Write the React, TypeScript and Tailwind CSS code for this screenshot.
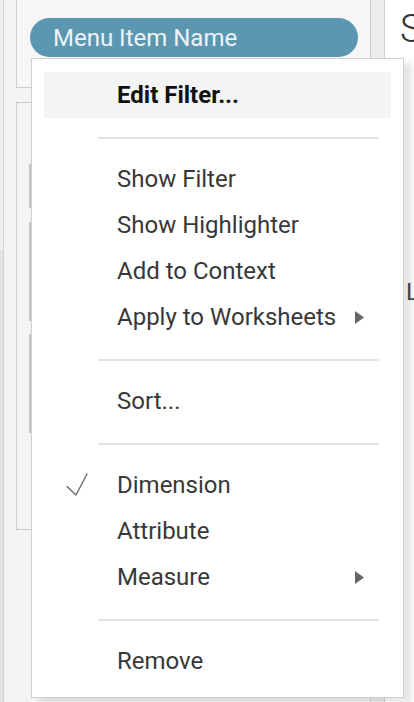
import React from 'react';

type Item =
  | { kind: 'item'; label: string; bold?: boolean; active?: boolean; checked?: boolean; submenu?: boolean }
  | { kind: 'sep' };

const items: Item[] = [
  { kind: 'item', label: 'Edit Filter...', bold: true, active: true },
  { kind: 'sep' },
  { kind: 'item', label: 'Show Filter' },
  { kind: 'item', label: 'Show Highlighter' },
  { kind: 'item', label: 'Add to Context' },
  { kind: 'item', label: 'Apply to Worksheets', submenu: true },
  { kind: 'sep' },
  { kind: 'item', label: 'Sort...' },
  { kind: 'sep' },
  { kind: 'item', label: 'Dimension', checked: true },
  { kind: 'item', label: 'Attribute' },
  { kind: 'item', label: 'Measure', submenu: true },
  { kind: 'sep' },
  { kind: 'item', label: 'Remove' },
];

function CheckMark() {
  return (
    <svg width="24" height="26" viewBox="0 0 24 26" fill="none">
      <path d="M1 14.5 L10 23 L21 2" stroke="#6b6b6b" strokeWidth="1.4" strokeLinecap="round" strokeLinejoin="round" />
    </svg>
  );
}

function SubArrow() {
  return (
    <svg width="9" height="13" viewBox="0 0 9 13">
      <path d="M0 0 L9 6.5 L0 13 Z" fill="#666666" />
    </svg>
  );
}

// Context menu that drops down from the pill
function PillMenu() {
  return (
    <div className="absolute left-[31px] top-[58px] w-[373px] border border-[#cfcfcf] bg-white px-[12px] pt-[13px] pb-[13px] shadow-[8px_5px_6px_rgba(0,0,0,0.1)]">
      {items.map((it, i) => {
        if (it.kind === 'sep') {
          return <div key={i} className="mt-[19px] mb-[17px] ml-[54px] mr-[12px] h-[2px] bg-[#e4e4e4]" />;
        }
        return (
          <div
            key={i}
            className={`flex h-[46px] items-center ${it.active ? 'bg-[#f4f4f4]' : ''}`}
          >
            <div className="flex w-[73px] items-center pl-[22px]">
              {it.checked && <CheckMark />}
            </div>
            <span
              className={`flex-1 text-[24px] leading-none ${it.bold ? 'font-bold text-[#111111]' : 'font-normal text-[#383838]'}`}
            >
              {it.label}
            </span>
            {it.submenu && (
              <div className="mr-[27px] flex items-center">
                <SubArrow />
              </div>
            )}
          </div>
        );
      })}
    </div>
  );
}

export default function App() {
  return (
    <div
      className="relative flex h-[702px] w-[414px] overflow-hidden bg-[#f3f3f3]"
      style={{ fontFamily: 'Roboto, "Liberation Sans", sans-serif' }}
    >
      {/* far left strip */}
      <div className="flex w-[4px] shrink-0 flex-col border-r border-[#d3d3d3]">
        <div className="h-[250px] bg-[#efefef]" />
        <div className="flex-1 bg-[#e2e2e2]" />
      </div>
      <div className="w-[12px] shrink-0 bg-[#f3f3f3]" />

      {/* shelf column */}
      <div className="flex w-[354px] shrink-0 flex-col">
        <div className="h-[88px] border-b border-l border-[#cdcdcd] bg-[#f6f6f6] pl-[13px] pt-[18px]">
          <div className="flex h-[39px] w-[328px] items-center rounded-full bg-[#5c97b2] pl-[23px] text-[24px] leading-none text-[#eef3f6]">
            Menu Item Name
          </div>
        </div>
        <div className="mt-[14px] h-[428px] border-l border-t border-b border-[#cdcdcd] bg-[#f4f4f4] pl-[12px] pt-[61px]">
          <div className="h-[44px] w-[3px] bg-[#c4c4c4]" />
          <div className="mt-[14px] h-[99px] w-[3px] bg-[#c4c4c4]" />
          <div className="mt-[13px] h-[99px] w-[3px] bg-[#c4c4c4]" />
        </div>
      </div>

      {/* divider strip */}
      <div className="w-[15px] shrink-0 border-l border-r border-[#d0d0d0] bg-[#ececec]" />

      {/* right canvas */}
      <div className="flex min-w-0 flex-1 flex-col overflow-hidden bg-white pl-[15px]">
        <div className="mt-[10px] text-[38px] font-light leading-none text-[#333333]">S</div>
        <div className="mt-[232px] pl-[6px] text-[24px] font-normal leading-none text-[#4a4a4a]">L</div>
      </div>

      <PillMenu />
    </div>
  );
}
